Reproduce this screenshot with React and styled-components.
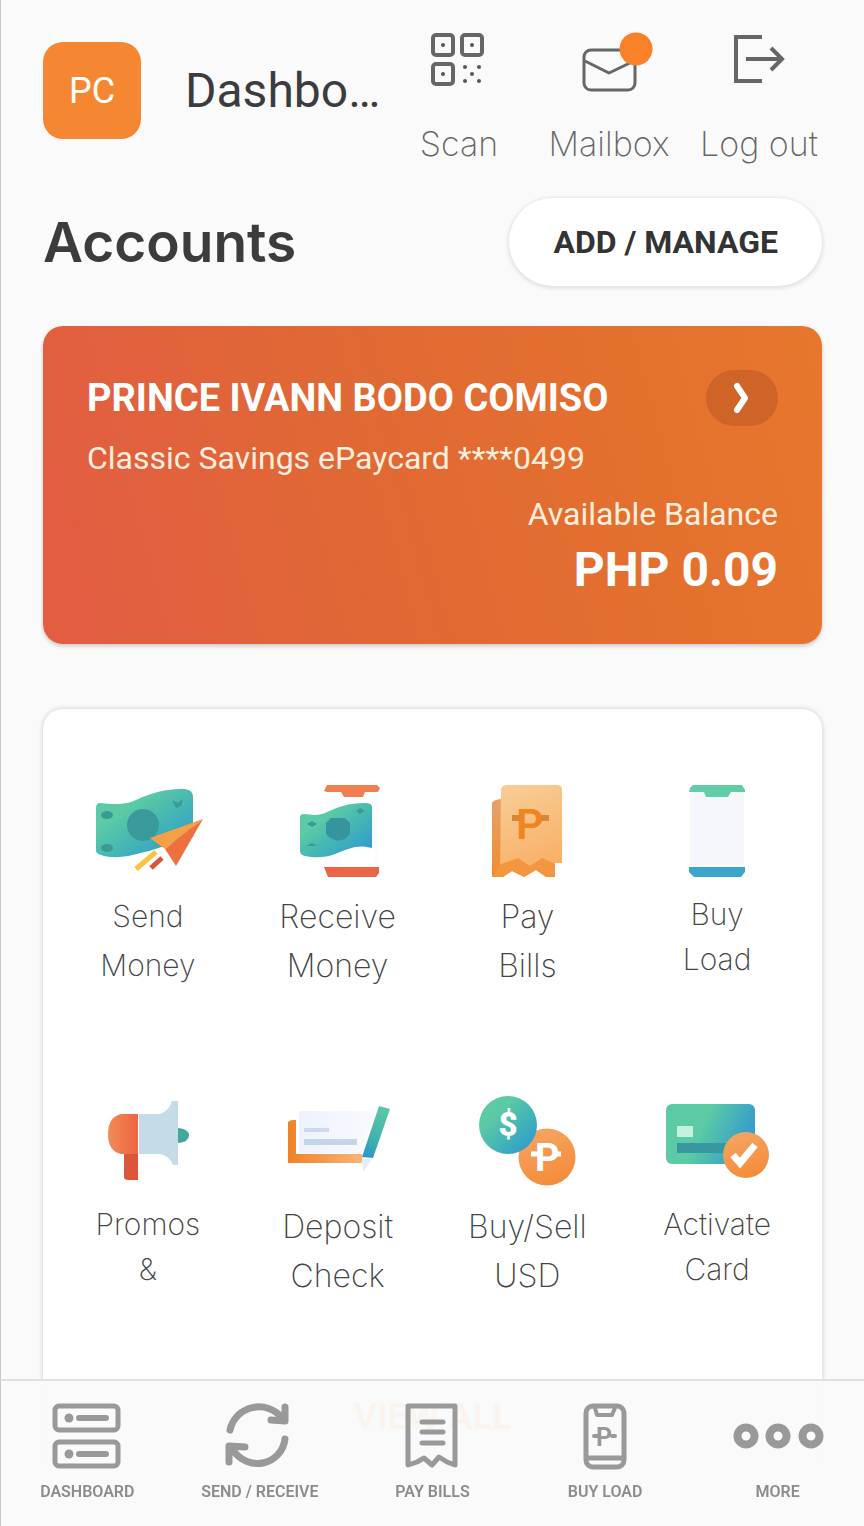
import React from 'react';
import styled, { createGlobalStyle } from 'styled-components';

const GlobalStyle = createGlobalStyle`
  *, *::before, *::after { box-sizing: border-box; }
  body {
    margin: 0;
    background: #fafafa;
    color: #3c3c3e;
    font-family: Roboto, "Liberation Sans", sans-serif;
  }
  button { font: inherit; color: inherit; border: 0; background: none; padding: 0; cursor: pointer; }
  a { color: inherit; text-decoration: none; }
  svg { display: block; }
`;

const Page = styled.div`
  min-height: 100vh;
  border-left: 1px solid #c9c9c9;
`;

const Header = styled.header`
  display: flex;
  align-items: flex-start;
  padding: 26px 30px 0 42px;
`;

const Brand = styled.div`
  flex: 1;
  display: flex;
  align-items: center;
  gap: 44px;
  padding-top: 16px;
`;

const Avatar = styled.div`
  display: grid;
  place-items: center;
  width: 98px;
  height: 97px;
  border-radius: 20px;
  background: #f58733;
  color: #fff;
  font-size: 36px;
  line-height: 44px;
`;

const Title = styled.h1`
  margin: 0;
  font-size: 48px;
  font-weight: 400;
  line-height: 56px;
  white-space: nowrap;
`;

const HeaderActions = styled.nav`
  display: grid;
  grid-template-columns: repeat(3, 150px);
`;

const HeaderAction = styled.button`
  display: flex;
  flex-direction: column;
  align-items: center;
  gap: 36px;
  color: #666;
  font-family: Inter, "Liberation Sans", sans-serif;
  font-size: 34px;
  font-weight: 200;
  line-height: 40px;
  white-space: nowrap;
`;

const SectionHead = styled.div`
  display: flex;
  align-items: center;
  justify-content: space-between;
  padding: 34px 42px 40px;
`;

const SectionTitle = styled.h2`
  margin: 0;
  font-family: Inter, "Liberation Sans", sans-serif;
  font-size: 55px;
  font-weight: 600;
  line-height: 64px;
`;

const PillButton = styled.button`
  height: 88px;
  padding: 0 44px;
  border-radius: 44px;
  background: #fff;
  box-shadow: 0 1px 4px 1px rgba(0, 0, 0, 0.12);
  font-size: 32px;
  font-weight: 700;
  line-height: 40px;
  color: #333;
`;

const AccountCard = styled.section`
  margin: 0 42px;
  padding: 44px 44px 46px;
  border-radius: 20px;
  background: linear-gradient(75deg, #e25d42 5%, #e06835 40%, #e4702e 75%, #e8772d);
  box-shadow: 0 2px 4px rgba(0, 0, 0, 0.2);
  color: #fff;
`;

const CardTop = styled.div`
  display: flex;
  align-items: center;
  justify-content: space-between;
  margin-bottom: 4px;
`;

const Holder = styled.h3`
  margin: 0;
  font-size: 38px;
  font-weight: 700;
  line-height: 56px;
`;

const OpenButton = styled.button`
  display: grid;
  place-items: center;
  width: 72px;
  height: 56px;
  border-radius: 28px;
  background: #cf6429;
`;

const CardText = styled.p`
  margin: 0;
  font-size: 32px;
  line-height: 56px;
  color: #ffeede;
  text-align: ${(p) => (p.$end ? 'right' : 'left')};
`;

const Balance = styled.p`
  margin: 0;
  font-size: 48px;
  font-weight: 700;
  line-height: 56px;
  text-align: right;
`;

const Panel = styled.section`
  display: flex;
  flex-direction: column;
  align-items: center;
  margin: 65px 42px 0;
  padding: 72px 10px 24px;
  border-radius: 20px 20px 0 0;
  background: #fff;
  box-shadow: 0 0 4px 1px rgba(0, 0, 0, 0.14);
`;

const Actions = styled.div`
  align-self: stretch;
  display: grid;
  grid-template-columns: repeat(4, 1fr);
  row-gap: 98px;
`;

const Action = styled.button`
  display: flex;
  flex-direction: column;
  align-items: center;
  gap: 11px;
  height: 212px;
  color: #444;
  font-family: Inter, "Liberation Sans", sans-serif;
  font-size: ${(p) => (p.$size === 'large' ? 32 : 30)}px;
  font-weight: 200;
  line-height: ${(p) => (p.$size === 'small' ? 45 : 49)}px;
`;

const ActionLabel = styled.span`
  white-space: pre-line;
`;

const ViewAll = styled.button`
  margin-top: 92px;
  color: #f58733;
  font-size: 36px;
  font-weight: 700;
  line-height: 44px;
`;

const TabBar = styled.nav`
  position: fixed;
  left: 0;
  right: 0;
  bottom: 0;
  display: grid;
  grid-template-columns: repeat(5, 1fr);
  padding: 21px 0 22px;
  border-top: 2px solid #e0e0e0;
  border-left: 1px solid #c9c9c9;
  background: rgba(250, 250, 250, 0.95);
`;

const Tab = styled.a`
  display: flex;
  flex-direction: column;
  align-items: center;
  gap: 10px;
  color: #8c8c8c;
  font-size: 16px;
  font-weight: 600;
  line-height: 24px;
`;

const LineIcon = ({ w = 72, h = 68, sw = 5, children }) => (
  <svg width={w} height={h} viewBox={`0 0 ${w} ${h}`} fill="none" stroke="#999" strokeWidth={sw}
    strokeLinecap="round" strokeLinejoin="round" aria-hidden="true">{children}</svg>
);

const ScanIcon = () => (
  <svg width="72" height="62" viewBox="0 0 72 62" fill="none" stroke="#666" strokeWidth="4" aria-hidden="true">
    <rect x="10" y="9" width="20" height="20" rx="3" />
    <rect x="39" y="9" width="20" height="20" rx="3" />
    <rect x="10" y="38" width="20" height="20" rx="3" />
    <g fill="#555" stroke="none">
      <circle cx="20" cy="19" r="2" /><circle cx="49" cy="19" r="2" /><circle cx="20" cy="48" r="2" />
      <circle cx="42" cy="41" r="2" /><circle cx="56" cy="41" r="2" /><circle cx="49" cy="48" r="2" />
      <circle cx="42" cy="55" r="2" /><circle cx="56" cy="55" r="2" />
    </g>
  </svg>
);

const MailIcon = () => (
  <svg width="88" height="68" viewBox="0 0 88 68" fill="none" stroke="#666" strokeWidth="3" strokeLinejoin="round" aria-hidden="true">
    <rect x="19" y="24" width="51" height="40" rx="7" />
    <path d="M20 35 44 47 69 35" />
    <circle cx="71" cy="23" r="16.500" fill="#fa8128" stroke="none" />
  </svg>
);

const LogoutIcon = () => (
  <svg width="72" height="62" viewBox="0 0 72 62" fill="none" stroke="#666" strokeWidth="4" aria-hidden="true">
    <path d="M39 11H13V55H39" />
    <path d="M23 33H59M48 22 59 33 48 44" />
  </svg>
);

const Art = ({ children }) => (
  <svg width="120" height="100" viewBox="0 0 120 100" aria-hidden="true">{children}</svg>
);

const Gradients = () => (
  <svg width="0" height="0" style={{ position: 'absolute' }} aria-hidden="true">
    <defs>
      <linearGradient id="mint" x1="0" y1="0" x2="1" y2="1">
        <stop offset="0.3" stopColor="#5bcaa5" /><stop offset="0.6" stopColor="#42b4b6" /><stop offset="0.9" stopColor="#329bd0" />
      </linearGradient>
      <linearGradient id="mintSide" x1="0" y1="0.3" x2="1" y2="0.6">
        <stop offset="0.4" stopColor="#5bcaa5" /><stop offset="0.9" stopColor="#389fca" />
      </linearGradient>
      <linearGradient id="pen" x1="0.5" y1="0" x2="0.3" y2="1">
        <stop offset="0" stopColor="#5ac7a6" /><stop offset="0.6" stopColor="#43b3ac" /><stop offset="1" stopColor="#2e95c9" />
      </linearGradient>
      <linearGradient id="peach" x1="0.3" y1="0" x2="0.6" y2="1">
        <stop offset="0" stopColor="#f8cc94" /><stop offset="1" stopColor="#f8ae63" />
      </linearGradient>
      <linearGradient id="amber" x1="0" y1="0" x2="0" y2="1">
        <stop offset="0" stopColor="#e6a26b" /><stop offset="1" stopColor="#f18b2d" />
      </linearGradient>
      <linearGradient id="coin" x1="0.3" y1="0" x2="0.7" y2="1">
        <stop offset="0" stopColor="#f5a563" /><stop offset="1" stopColor="#f58a38" />
      </linearGradient>
      <linearGradient id="tray" x1="0" y1="0" x2="1" y2="0">
        <stop offset="0" stopColor="#f18224" /><stop offset="1" stopColor="#f8b477" />
      </linearGradient>
      <linearGradient id="red" x1="0" y1="0" x2="1" y2="0">
        <stop offset="0" stopColor="#f28a57" /><stop offset="1" stopColor="#ec6640" />
      </linearGradient>
      <linearGradient id="paper" x1="0" y1="0" x2="1" y2="0">
        <stop offset="0" stopColor="#edf2fc" /><stop offset="1" stopColor="#fafaff" />
      </linearGradient>
    </defs>
  </svg>
);

const SendArt = () => (
  <Art>
    <path d="M12 22C22 23 33 24 43 21C56 16 68 8 97 8Q105 9 105 16V56L61 70C48 73 38 77 22 76Q8 74 8 70V27Q8 22 12 22Z" fill="url(#mint)" />
    <circle cx="55" cy="44" r="16" fill="#3a9a99" />
    <g fill="#3a9b94"><ellipse cx="19" cy="34" rx="6" ry="4" /><ellipse cx="19" cy="67" rx="6" ry="4" /><path d="M84 19 90 22 95 18 93 25 88 27Z" /></g>
    <path d="M115 38 62 57 77 68Z" fill="#f5a044" />
    <path d="M115 38 77 68 88 85Z" fill="#ee713d" />
    <path d="M68 71 48 88" stroke="#f7c53f" strokeWidth="5" />
    <path d="M74 77 63 87" stroke="#d9553c" strokeWidth="5" />
  </Art>
);

const ReceiveArt = () => (
  <Art>
    <path d="M49 4H99L102 7 100 11H87L85 16H66L63 11H49L46 10Z" fill="#f0804f" />
    <path d="M46 86H101V92L98 96H50Z" fill="#ea6448" />
    <path d="M47 16H62V84H47Z M95 16H101V84H95Z" fill="#fcfcfe" />
    <path d="M26 33C34 34 42 35 49 31C60 26 70 22 87 22Q94 22 94 26V67C80 63 72 67 57 73C47 77 36 77 27 75Q22 74 22 70V36Q22 33 26 33Z" fill="url(#mint)" />
    <path d="M53 37H67L72 42V53L67 58 60 60 52 57 48 53V42Z" fill="#36959c" />
    <g fill="#3a9b94"><path d="M29 43 34 40 39 43 34 46Z M28 65 34 62 39 65Z M78 30 82 27 87 30 82 33Z" /></g>
  </Art>
);

const BillsArt = () => (
  <Art>
    <path d="M25 96V22Q27 18 36 18V96Z" fill="url(#amber)" />
    <path d="M34 8Q35 4 41 4H91Q95 5 95 8V82H88V96H79L69 89 57 96 45 90 36 96H33Z" fill="url(#peach)" />
    <path d="M34 83 43 80 51 77 63 85 75 77 88 83V96H79L69 89 57 96 45 90 36 96H25Z" fill="#f3963f" />
    <text x="49" y="58" fontFamily="Roboto, sans-serif" fontWeight="600" fontSize="43" fill="#ef8422">P</text>
    <path d="M45 37H52M74 37H82" stroke="#d88738" strokeWidth="6" />
  </Art>
);

const LoadArt = () => (
  <Art>
    <path d="M33 11H87V84H33Z" fill="#f6f7fd" />
    <path d="M36 4H85L88 9V11H74L71 16H49L47 11H32L33 7Z" fill="#60cda6" />
    <path d="M32 86H88V91L84 96H37L32 91Z" fill="#3ca5cc" />
  </Art>
);

const PromoArt = () => (
  <Art>
    <path d="M36 61H50V89H40Q36 89 36 86Z" fill="#dc5639" />
    <path d="M50 23H33Q20 26 20 43Q20 60 33 63H50Z" fill="url(#red)" />
    <path d="M51 23H72Q81 20 84 10H90V74H85Q81 64 71 63H51Z" fill="#c4dce8" />
    <path d="M90 37Q101 38 101 44.500Q101 51 90 52Z" fill="#43a89a" />
  </Art>
);

const DepositArt = () => (
  <Art>
    <path d="M21 20H96L84 62H21Z" fill="url(#paper)" />
    <path d="M10 31Q12 29 15 29H18V63H84V72H10Z" fill="url(#tray)" />
    <path d="M26 39H51" stroke="#cbd8ee" strokeWidth="4" />
    <path d="M26 51H79" stroke="#c5d4ea" strokeWidth="6" />
    <path d="M101 15 112 18 95 67 84 66Z" fill="url(#pen)" />
    <path d="M84 67 94 68 85 81Z" fill="#e7eaf8" />
  </Art>
);

const UsdArt = () => (
  <Art>
    <circle cx="80" cy="66" r="28.500" fill="url(#coin)" />
    <circle cx="41" cy="34" r="29" fill="url(#mint)" />
    <text x="41" y="45" textAnchor="middle" fontFamily="Roboto, sans-serif" fontWeight="900" fontSize="33" fill="#fff">$</text>
    <text x="68" y="80" fontFamily="Roboto, sans-serif" fontWeight="700" fontSize="38" fill="#fff">P</text>
    <path d="M64 63H71M89 63H94" stroke="#fff" strokeWidth="5" />
  </Art>
);

const ActivateArt = () => (
  <Art>
    <rect x="9" y="13" width="89" height="60" rx="6" fill="url(#mintSide)" />
    <rect x="20" y="35" width="16" height="11" fill="#c5f0dd" />
    <rect x="20" y="52" width="52" height="10" fill="#38979f" />
    <circle cx="89" cy="64" r="23" fill="url(#coin)" />
    <path d="M76 64 83 72 98 54" fill="none" stroke="#fff" strokeWidth="7" />
  </Art>
);

const DashboardIcon = () => (
  <LineIcon>
    <rect x="4" y="4" width="63" height="24" rx="4" /><rect x="4" y="40" width="63" height="24" rx="4" />
    <path d="M28 16H55M28 52H55" strokeWidth="6" />
    <g fill="#999" stroke="none"><circle cx="18" cy="16" r="4.500" /><circle cx="18" cy="52" r="4.500" /></g>
  </LineIcon>
);

const SwapIcon = () => (
  <LineIcon sw={7}>
    <path d="M6 28C11 4 43 -4 59 17M61 5V19L47 18" />
    <path d="M61 37C58 62 25 72 8 47M5 60V44L21 45" />
  </LineIcon>
);

const BillIcon = () => (
  <LineIcon>
    <path d="M12 4H59V63L51 60 43 55 36 63 28 56 21 60 12 63Z" />
    <path d="M26 20H47M26 30H47M26 41H47" />
  </LineIcon>
);

const PhoneIcon = () => (
  <LineIcon>
    <rect x="17" y="4" width="38" height="61" rx="7" />
    <path d="M18 56H54" />
    <path d="M26 6 28 13H43L46 6" strokeWidth="4" />
    <text x="27" y="44" fontFamily="Roboto, sans-serif" fontWeight="700" fontSize="25" fill="#999" stroke="none">P</text>
    <path d="M25 34H29M43 34H46" strokeWidth="4" />
  </LineIcon>
);

const MoreIcon = () => (
  <LineIcon w={96} sw={8}>
    <circle cx="16" cy="34" r="8.500" /><circle cx="48" cy="34" r="8.500" /><circle cx="81" cy="34" r="8.500" />
  </LineIcon>
);

const headerActions = [['Scan', ScanIcon], ['Mailbox', MailIcon], ['Log out', LogoutIcon]];

const actions = [
  ['Send\nMoney', SendArt, 'medium'],
  ['Receive\nMoney', ReceiveArt, 'large'],
  ['Pay\nBills', BillsArt, 'large'],
  ['Buy\nLoad', LoadArt, 'small'],
  ['Promos\n&', PromoArt, 'small'],
  ['Deposit\nCheck', DepositArt, 'large'],
  ['Buy/Sell\nUSD', UsdArt, 'large'],
  ['Activate\nCard', ActivateArt, 'small'],
];

const tabs = [
  ['DASHBOARD', DashboardIcon],
  ['SEND / RECEIVE', SwapIcon],
  ['PAY BILLS', BillIcon],
  ['BUY LOAD', PhoneIcon],
  ['MORE', MoreIcon],
];

const HeaderIconBox = styled.span`
  display: grid;
  place-items: end center;
  height: 62px;
`;

export default function App() {
  return (
    <Page>
      <GlobalStyle />
      <Gradients />
      <Header>
        <Brand>
          <Avatar>PC</Avatar>
          <Title>Dashbo…</Title>
        </Brand>
        <HeaderActions>
          {headerActions.map(([label, Icon]) => (
            <HeaderAction key={label} type="button">
              <HeaderIconBox><Icon /></HeaderIconBox>
              {label}
            </HeaderAction>
          ))}
        </HeaderActions>
      </Header>
      <main>
        <SectionHead>
          <SectionTitle>Accounts</SectionTitle>
          <PillButton type="button">ADD / MANAGE</PillButton>
        </SectionHead>
        <AccountCard>
          <CardTop>
            <Holder>PRINCE IVANN BODO COMISO</Holder>
            <OpenButton type="button" aria-label="Open account">
              <svg width="24" height="36" viewBox="0 0 24 36" fill="none" stroke="#fff" strokeWidth="6" aria-hidden="true">
                <path d="M7 6 15 18 7 30" strokeLinecap="round" strokeLinejoin="round" />
              </svg>
            </OpenButton>
          </CardTop>
          <CardText>Classic Savings ePaycard ****0499</CardText>
          <CardText $end>Available Balance</CardText>
          <Balance>PHP 0.09</Balance>
        </AccountCard>
        <Panel>
          <Actions>
            {actions.map(([label, Icon, size]) => (
              <Action key={label} type="button" $size={size}>
                <Icon />
                <ActionLabel>{label}</ActionLabel>
              </Action>
            ))}
          </Actions>
          <ViewAll type="button">VIEW ALL</ViewAll>
        </Panel>
      </main>
      <TabBar>
        {tabs.map(([label, Icon]) => (
          <Tab key={label} href="#">
            <Icon />
            {label}
          </Tab>
        ))}
      </TabBar>
    </Page>
  );
}
